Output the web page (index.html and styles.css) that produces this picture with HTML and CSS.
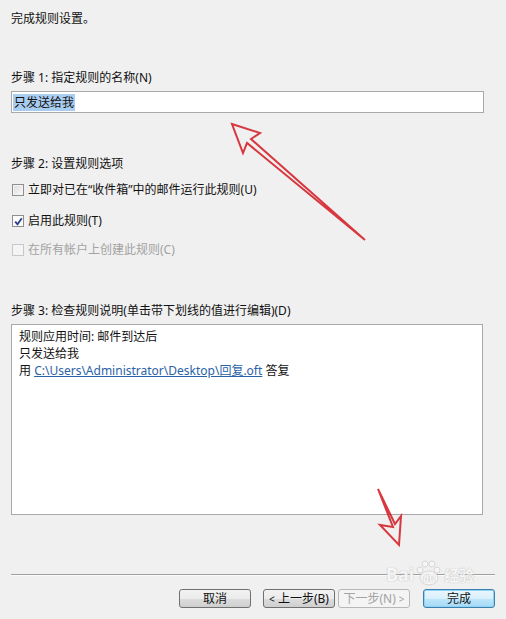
FILE: index.html
```html
<!DOCTYPE html>
<html lang="zh-CN">
<head>
<meta charset="utf-8">
<link rel="stylesheet" href="styles.css">
</head>
<body>
<div class="page">
  <div class="content">
    <p class="intro">完成规则设置。</p>

    <p class="label step1">步骤 1: 指定规则的名称(N)</p>
    <div class="input"><span class="sel">只发送给我</span></div>

    <p class="label step2">步骤 2: 设置规则选项</p>
    <div class="check row1"><span class="box"></span><span>立即对已在“收件箱”中的邮件运行此规则(U)</span></div>
    <div class="check row2"><span class="box checked"><svg width="9" height="9" viewBox="0 0 9 9"><path d="M1.2 4.6 L3.5 7.2 L7.8 1.2" fill="none" stroke="#2a3f8a" stroke-width="1.8"/></svg></span><span>启用此规则(T)</span></div>
    <div class="check row3 disabled"><span class="box"></span><span>在所有帐户上创建此规则(C)</span></div>

    <p class="label step3">步骤 3: 检查规则说明(单击带下划线的值进行编辑)(D)</p>
    <div class="desc">
      <div>规则应用时间: 邮件到达后</div>
      <div>只发送给我</div>
      <div>用 <a class="link">C:\Users\Administrator\Desktop\回复.oft</a> 答复</div>
    </div>
  </div>

  <div class="footer">
    <div class="sep"></div>
    <div class="buttons">
      <button class="btn cancel">取消</button>
      <button class="btn back"><span class="lt">&lt;</span> 上一步(B)</button>
      <button class="btn next" disabled>下一步(N) <span class="lt">&gt;</span></button>
      <button class="btn finish">完成</button>
    </div>
  </div>

  <div class="watermark">
    <span class="wm-bai">Bai</span>
    <span class="wm-paw"><svg width="26" height="26" viewBox="0 0 26 26"><g fill="#f6f6f6" stroke="#d4d4d4" stroke-width="1"><circle cx="9" cy="4" r="3"/><circle cx="16" cy="4" r="3"/><circle cx="4" cy="10" r="3"/><circle cx="21" cy="10" r="3"/><ellipse cx="13" cy="18" rx="9" ry="7"/></g></svg><span class="wm-du">du</span></span>
    <span class="wm-jy">经验</span>
  </div>

  <svg class="arrows" width="506" height="619" viewBox="0 0 506 619">
    <g fill="none" stroke="#d4232b" stroke-width="2" stroke-linejoin="miter" opacity="0.9">
      <path d="M232 124 L260 133 L251 139 L365 240 L247 143 L243 153 Z"/>
      <path d="M378 489 L393 527 L380 525 L399 545 L401 516 L395 524 Z"/>
    </g>
  </svg>
</div>
</body>
</html>
```
FILE: styles.css
```css
* { box-sizing: border-box; }
html, body {
  margin: 0;
  padding: 0;
}
body {
  width: 506px;
  height: 619px;
  background: #f0f0f0;
  font-family: "Noto Sans", "Noto Sans CJK SC", sans-serif;
  font-size: 12px;
  color: #111;
  overflow: hidden;
}
.page {
  position: relative;
  width: 506px;
  height: 619px;
}
.content {
  padding: 11px 0 0 11px;
}
p { margin: 0; }
.intro, .label {
  line-height: 16px;
  height: 16px;
}
.step1 { margin-top: 43px; }
.input {
  margin-top: 5px;
  width: 473px;
  height: 22px;
  background: #fff;
  border: 1px solid #a9a9a9;
  padding: 2px 1px;
  line-height: 16px;
}
.sel {
  background: #a9cdf0;
  color: #111;
  display: inline-block;
  line-height: 17px;
  padding: 0 1px;
}
.step2 { margin-top: 43px; }
.check {
  display: flex;
  align-items: center;
  gap: 4px;
  height: 16px;
  line-height: 16px;
}
.row1 { margin-top: 10px; }
.row2 { margin-top: 15px; }
.row3 { margin-top: 13px; }
.box {
  width: 12px;
  height: 12px;
  margin-left: 1px;
  border: 1px solid #8f8f8f;
  background: linear-gradient(135deg, #dcdcdc, #fafafa);
  box-shadow: inset 0 0 0 1px #f4f4f4;
  display: flex;
  align-items: center;
  justify-content: center;
}
.box.checked {
  background: #fafafa;
  box-shadow: none;
}
.disabled { color: #a2a2a2; }
.disabled .box {
  border-color: #c8c8c8;
  background: #f4f4f4;
  box-shadow: none;
}
.step3 { margin-top: 45px; }
.desc {
  margin-top: 5px;
  width: 472px;
  height: 191px;
  background: #fff;
  border: 1px solid #a9a9a9;
  padding: 3px 7px;
  line-height: 17px;
}
.link {
  color: #2a62a6;
  text-decoration: underline;
}
.footer {
  padding: 0 11px;
  margin-top: 59px;
}
.sep {
  height: 2px;
  background: #a0a0a0;
  border-bottom: 1px solid #fbfbfb;
}
.buttons {
  margin-top: 13px;
  display: flex;
  justify-content: flex-end;
}
.btn {
  width: 72px;
  height: 19px;
  padding: 0;
  font-family: inherit;
  font-size: 12px;
  line-height: 15px;
  color: #111;
  border: 1px solid #707070;
  border-radius: 3px;
  background: linear-gradient(#f2f2f2 0%, #ebebeb 50%, #dddddd 51%, #cfcfcf 100%);
}
.lt { font-size: 10px; }
.back { margin-left: 12px; }
.next {
  margin-left: 3px;
  color: #a3a3a3;
  border-color: #b7b7b7;
  background: #f4f4f4;
}
.finish {
  margin-left: 13px;
  border-color: #3c7fb1;
  box-shadow: inset 0 0 0 1px #8fd3f3;
  background: linear-gradient(#eaf6fd 0%, #d9f0fc 50%, #bee6fd 51%, #a7d9f5 100%);
}
.watermark {
  position: absolute;
  left: 386px;
  top: 560px;
  display: flex;
  align-items: flex-end;
  gap: 2px;
  font-size: 18px;
  font-weight: bold;
  color: #f7f7f7;
  text-shadow: 0 0 1px #bdbdbd, 0 0 1px #bdbdbd;
  pointer-events: none;
  opacity: 0.9;
}
.wm-paw {
  position: relative;
  width: 26px;
  height: 26px;
}
.wm-paw svg { display: block; }
.wm-du {
  position: absolute;
  left: 0;
  right: 0;
  bottom: 1px;
  text-align: center;
  font-size: 10px;
  color: #f8f8f8;
}
.wm-jy { font-size: 15px; line-height: 22px; }
.arrows {
  position: absolute;
  left: 0;
  top: 0;
  pointer-events: none;
}
```
